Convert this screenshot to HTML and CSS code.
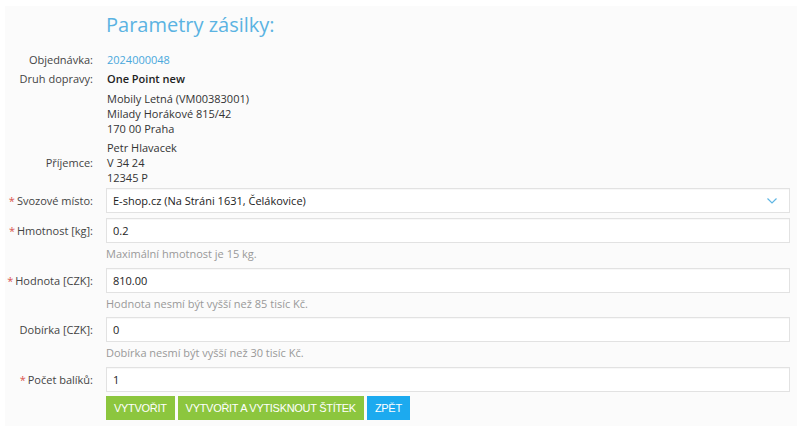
FILE: index.html
```html
<!DOCTYPE html>
<html lang="cs">
<head>
<meta charset="utf-8">
<title>Parametry zásilky</title>
<link rel="stylesheet" href="styles.css">
</head>
<body>
<div class="panel">
  <h1 class="title">Parametry zásilky:</h1>
  <div class="row info">
    <div class="label">Objednávka:</div>
    <div class="value"><a class="link" href="#">2024000048</a></div>
  </div>
  <div class="row info">
    <div class="label">Druh dopravy:</div>
    <div class="value">
      <div class="strong">One Point new</div>
      <div class="addr">Mobily Letná (VM00383001)<br>Milady Horákové 815/42<br>170 00 Praha</div>
    </div>
  </div>
  <div class="row recipient">
    <div class="label">Příjemce:</div>
    <div class="value addr">Petr Hlavacek<br>V 34 24<br>12345 P</div>
  </div>
  <div class="row field">
    <div class="label"><span class="req">*</span>Svozové místo:</div>
    <div class="value">
      <div class="input select">
        <span>E-shop.cz (Na Stráni 1631, Čelákovice)</span>
        <svg class="chev" width="10" height="6" viewBox="0 0 10 6"><path d="M0.5 0.5 L5 5 L9.5 0.5" fill="none" stroke="#5fb6e4" stroke-width="1.2"/></svg>
      </div>
    </div>
  </div>
  <div class="row field">
    <div class="label"><span class="req">*</span>Hmotnost [kg]:</div>
    <div class="value">
      <div class="input">0.2</div>
      <div class="help">Maximální hmotnost je 15 kg.</div>
    </div>
  </div>
  <div class="row field">
    <div class="label"><span class="req">*</span>Hodnota [CZK]:</div>
    <div class="value">
      <div class="input">810.00</div>
      <div class="help">Hodnota nesmí být vyšší než 85 tisíc Kč.</div>
    </div>
  </div>
  <div class="row field">
    <div class="label">Dobírka [CZK]:</div>
    <div class="value">
      <div class="input">0</div>
      <div class="help">Dobírka nesmí být vyšší než 30 tisíc Kč.</div>
    </div>
  </div>
  <div class="row field last">
    <div class="label"><span class="req">*</span>Počet balíků:</div>
    <div class="value">
      <div class="input">1</div>
    </div>
  </div>
  <div class="row buttons">
    <div class="label"></div>
    <div class="value btns">
      <button class="btn green">VYTVOŘIT</button>
      <button class="btn green">VYTVOŘIT A VYTISKNOUT ŠTÍTEK</button>
      <button class="btn blue">ZPĚT</button>
    </div>
  </div>
</div>
</body>
</html>
```

FILE: styles.css
```css
* { box-sizing: border-box; }
html, body { margin: 0; padding: 0; background: #ffffff; }
body {
  font-family: "Open Sans", "Noto Sans", sans-serif;
  font-size: 11px;
  color: #333;
}
.panel {
  margin: 6px 3px 0 5px;
  padding: 0 7px 6px 0;
  background: #fbfbfb;
  height: 420px;
}
.title {
  margin: 0 0 0 101px;
  padding-top: 5px;
  font-size: 20px;
  line-height: 28px;
  font-weight: 400;
  color: #5ab3e2;
  height: 44px;
}
.row { display: flex; }
.label {
  flex: none;
  width: 88px;
  margin-right: 13px;
  text-align: right;
  color: #444;
}
.value { flex: 1; min-width: 0; }
.info .label, .info .value { line-height: 19px; }
.info .value { padding-left: 1px; }
.link { color: #4aa8dc; text-decoration: none; }
.strong { color: #222; font-weight: 600; }
.addr { line-height: 15px; color: #333; }
.info .addr { margin-top: 3px; }
.recipient { margin-top: 4px; margin-bottom: 3px; align-items: center; }
.recipient .value { padding-left: 1px; }
.field .label { line-height: 25px; }
.field { margin-bottom: 5px; }
.field.last { margin-bottom: 4px; }
.req { color: #d9534f; margin-right: 2px; }
.input {
  height: 25px;
  line-height: 23px;
  border: 1px solid #e2e2e2;
  background: #fff;
  padding: 0 6px;
  color: #222;
  box-shadow: inset 0 1px 1px rgba(0,0,0,0.03);
}
.select { display: flex; justify-content: space-between; align-items: center; }
.chev { margin-right: 6px; }
.help {
  color: #999;
  padding-top: 3px;
  line-height: 16.5px;
}
.btns { display: flex; gap: 3px; }
.btn {
  border: none;
  height: 24px;
  padding: 0 8px;
  font-family: "Liberation Sans", Arial, sans-serif;
  font-size: 11px;
  letter-spacing: -0.3px;
  color: #fff;
  cursor: pointer;
}
.green { background: #8cc63e; }
.blue { background: #1caaef; }
```
